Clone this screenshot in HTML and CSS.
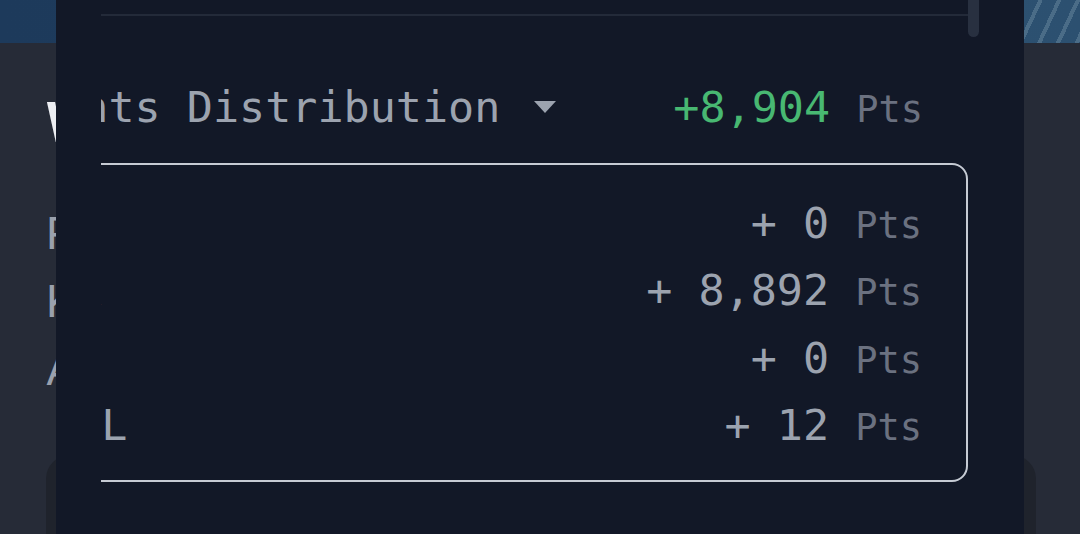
FILE: index.html
```html
<!DOCTYPE html>
<html lang="en">
<head>
<meta charset="utf-8">
<title>Points Distribution</title>
<link rel="stylesheet" href="styles.css">
</head>
<body>
  <div class="page">
    <div class="banner"></div>
    <div class="page-body">
      <h1 class="page-title">Wallet overview</h1>
      <p class="page-line">Points earned</p>
      <p class="page-line">Kickoff season</p>
      <p class="page-line">Activity log</p>
      <div class="page-card"></div>
    </div>
  </div>

  <div class="sheet">
    <div class="viewport">
      <div class="content">
        <div class="divider"></div>
        <div class="heading">
          <span class="heading-title">Points Distribution<svg class="caret" width="24" height="14" viewBox="0 0 24 14"><path d="M1 1 H23 L12 13 Z" fill="#9ca3af"/></svg></span>
          <span class="heading-value"><span class="green">+8,904</span> <span class="pts">Pts</span></span>
        </div>
        <div class="breakdown">
          <div class="row"><span class="label">OP</span><span class="amount">+ 0 <span class="pts">Pts</span></span></div>
          <div class="row"><span class="label">ZK</span><span class="amount">+ 8,892 <span class="pts">Pts</span></span></div>
          <div class="row"><span class="label">BT</span><span class="amount">+ 0 <span class="pts">Pts</span></span></div>
          <div class="row"><span class="label">SOL</span><span class="amount">+ 12 <span class="pts">Pts</span></span></div>
        </div>
      </div>
    </div>
    <div class="thumb"></div>
  </div>
</body>
</html>
```

FILE: styles.css
```css
* { box-sizing: border-box; }

html, body {
  margin: 0;
  padding: 0;
  height: 100%;
  overflow: hidden;
}

body {
  background: #262b37;
  font-family: "Roboto", "Liberation Sans", sans-serif;
}

.page {
  width: 1080px;
  height: 534px;
  overflow: hidden;
}

.banner {
  height: 43px;
  background:
    linear-gradient(90deg, #1d3a5b 0%, #1f3e61 88%, rgba(31,62,97,0) 88%),
    repeating-linear-gradient(115deg, rgba(120,150,170,0) 0 6px, rgba(120,150,170,0.4) 6px 10px, rgba(30,70,110,0) 10px 17px),
    linear-gradient(90deg, #2d5676 0%, #2c5070 100%);
}

.page-body {
  padding: 52px 0 0 46px;
  display: flex;
  flex-direction: column;
}

.page-title {
  margin: 0 0 60px;
  font-size: 56px;
  font-weight: 700;
  line-height: 56px;
  color: #eceef2;
}

.page-line {
  margin: 0 0 22px;
  font-size: 45px;
  line-height: 46px;
  color: #9aa0ac;
}

.page-card {
  margin-top: 40px;
  height: 120px;
  width: 990px;
  border-radius: 24px;
  background: #1f232c;
}

.sheet {
  position: absolute;
  top: 0;
  left: 56px;
  width: 968px;
  height: 534px;
  background: #121827;
  padding: 0 56px 0 45px;
}

.viewport {
  width: 867px;
  height: 534px;
  overflow: hidden;
}

.content {
  margin-left: -97px;
  width: 964px;
  font-family: "DejaVu Sans Mono", "Liberation Mono", monospace;
  font-size: 43.4px;
  color: #9ca3af;
}

.divider {
  margin-top: 14px;
  margin-left: 97px;
  height: 2px;
  background: #232a39;
}

.heading {
  margin-top: 65px;
  display: flex;
  justify-content: space-between;
  align-items: baseline;
  line-height: 52px;
  padding-right: 45px;
  white-space: pre;
}

.caret {
  margin-left: 33px;
  vertical-align: 8px;
}

.green {
  color: #48b872;
}

.pts {
  font-size: 37px;
  line-height: 1;
  color: #6b7180;
}

.breakdown {
  margin-top: 30px;
  border: 2px solid #c6cbd4;
  border-radius: 16px;
  padding: 25px 44px 21px 43px;
  display: flex;
  flex-direction: column;
}

.row {
  display: flex;
  justify-content: space-between;
  align-items: baseline;
  height: 67.3px;
  line-height: 67px;
  white-space: pre;
}

.thumb {
  position: absolute;
  top: -10px;
  left: 912px;
  width: 11px;
  height: 47px;
  border-radius: 6px;
  background: #283040;
}
```
